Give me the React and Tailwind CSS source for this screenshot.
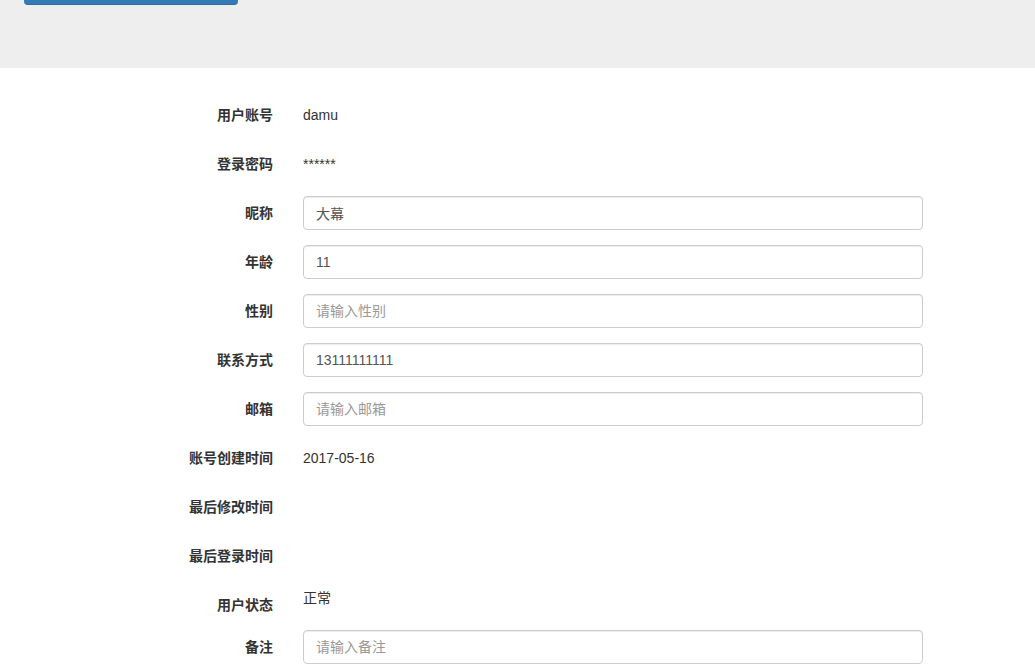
const fields = [
  { label: '用户账号', type: 'static', value: 'damu' },
  { label: '登录密码', type: 'static', value: '******' },
  { label: '昵称', type: 'input', value: '大幕', placeholder: '请输入昵称' },
  { label: '年龄', type: 'input', value: '11', placeholder: '请输入年龄' },
  { label: '性别', type: 'input', value: '', placeholder: '请输入性别' },
  { label: '联系方式', type: 'input', value: '13111111111', placeholder: '请输入联系方式' },
  { label: '邮箱', type: 'input', value: '', placeholder: '请输入邮箱' },
  { label: '账号创建时间', type: 'static', value: '2017-05-16' },
  { label: '最后修改时间', type: 'static', value: '' },
  { label: '最后登录时间', type: 'static', value: '' },
  { label: '用户状态', type: 'plain', value: '正常' },
  { label: '备注', type: 'input', value: '', placeholder: '请输入备注' },
];

const FormRow = ({ field }) => (
  <div className="flex mb-[15px]">
    <label className="w-[288px] pr-[15px] pt-[7px] text-right font-bold leading-[20px]">
      {field.label}
    </label>
    <div className="w-[650px] px-[15px]">
      {field.type === 'input' && (
        <input
          type="text"
          defaultValue={field.value}
          placeholder={field.placeholder}
          className="block w-full h-[34px] px-[12px] py-[6px] text-[14px] leading-[20px] text-[#555] bg-white border border-[#ccc] rounded-[4px] shadow-[inset_0_1px_1px_rgba(0,0,0,0.075)] placeholder:text-[#999] outline-none"
        />
      )}
      {field.type === 'static' && (
        <p className="min-h-[34px] py-[7px] leading-[20px]">{field.value}</p>
      )}
      {field.type === 'plain' && <p className="leading-[20px]">{field.value}</p>}
    </div>
  </div>
);

export default function App() {
  return (
    <div
      className="min-h-[672px] bg-white text-[14px] text-[#333]"
      style={{ fontFamily: '"Liberation Sans", "Noto Sans CJK SC", sans-serif' }}
    >
      {/* header, scrolled so only the bottom of the button shows */}
      <div className="h-[68px] bg-[#eeeeee]">
        <div className="ml-[24px] h-[5px] w-[214px] rounded-b-[4px] bg-[#337ab7] border-b border-[#2e6da4]" />
      </div>

      <form className="pt-[30px]">
        {fields.map((f) => (
          <FormRow key={f.label} field={f} />
        ))}
      </form>
    </div>
  );
}
